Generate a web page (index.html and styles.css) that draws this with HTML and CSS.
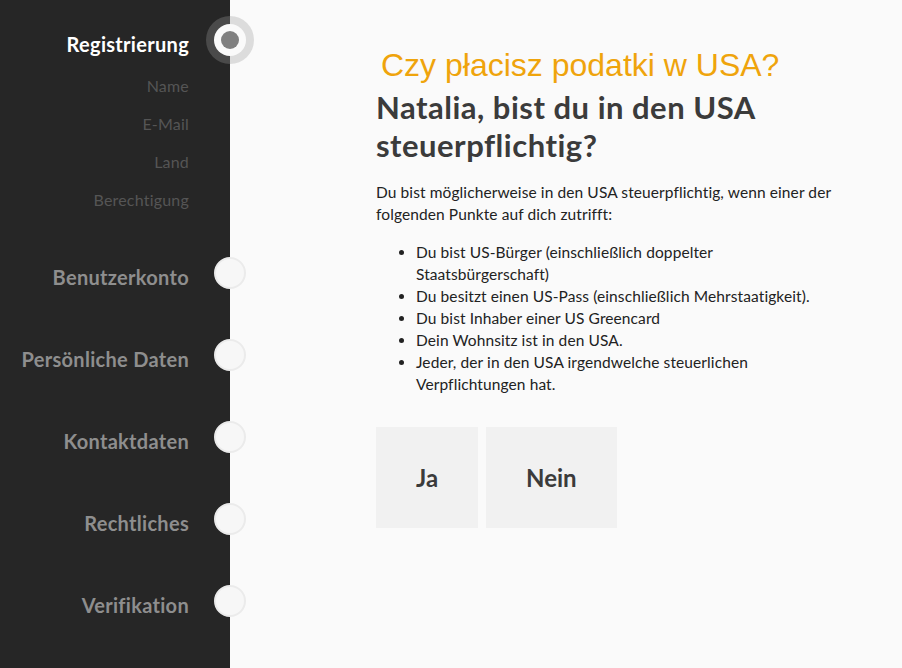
FILE: index.html
```html
<!DOCTYPE html>
<html lang="de">
<head>
<meta charset="utf-8">
<link rel="stylesheet" href="styles.css">
<title>Registrierung</title>
</head>
<body>
  <div class="wrap">
    <div class="sidebar">
      <div class="step active">Registrierung<span class="dot"></span></div>
      <ul class="substeps">
        <li>Name</li>
        <li>E-Mail</li>
        <li>Land</li>
        <li>Berechtigung</li>
      </ul>
      <div class="step first">Benutzerkonto<span class="dot"></span></div>
      <div class="step">Persönliche Daten<span class="dot"></span></div>
      <div class="step">Kontaktdaten<span class="dot"></span></div>
      <div class="step">Rechtliches<span class="dot"></span></div>
      <div class="step">Verifikation<span class="dot"></span></div>
    </div>
    <div class="main">
      <div class="content">
        <div class="translate">Czy płacisz podatki w USA?</div>
        <h1>Natalia, bist du in den USA steuerpflichtig?</h1>
        <p>Du bist möglicherweise in den USA steuerpflichtig, wenn einer der folgenden Punkte auf dich zutrifft:</p>
        <ul class="points">
          <li>Du bist US-Bürger (einschließlich doppelter Staatsbürgerschaft)</li>
          <li>Du besitzt einen US-Pass (einschließlich Mehrstaatigkeit).</li>
          <li>Du bist Inhaber einer US Greencard</li>
          <li>Dein Wohnsitz ist in den USA.</li>
          <li>Jeder, der in den USA irgendwelche steuerlichen Verpflichtungen hat.</li>
        </ul>
        <div class="answers">
          <a href="javascript:void(0);" class="btn">Ja</a>
          <a href="javascript:void(0);" class="btn">Nein</a>
        </div>
      </div>
    </div>
  </div>
</body>
</html>
```

FILE: styles.css
```css
*{margin:0;padding:0;box-sizing:border-box;}
html,body{height:100%;}
body{font-family:"Lato","Noto Sans",sans-serif;background:#fafafa;overflow:hidden;}
.wrap{display:flex;height:100vh;}

/* linke Navigation */
.sidebar{width:230px;flex:none;background:#262626;padding-top:32px;position:relative;z-index:2;}
.step{position:relative;text-align:right;padding-right:41px;font-size:20px;font-weight:700;letter-spacing:0.3px;line-height:24px;color:#8e8e8e;}
.step+.step{margin-top:58px;}
.step.first{margin-top:46px;}
.step.active{color:#fff;}
.dot{position:absolute;right:-16px;top:-8px;width:32px;height:32px;border-radius:50%;background:#f7f7f7;border:2px solid #ebebeb;}
.step.active .dot{background:#fafafa;border:none;box-shadow:0 0 0 8px rgba(154,154,154,0.31);}
.step.active .dot:after{content:"";position:absolute;left:7px;top:7px;width:18px;height:18px;border-radius:50%;background:#808080;}
.substeps{list-style:none;margin-top:11px;}
.substeps li{text-align:right;padding-right:41px;font-size:16px;letter-spacing:0.2px;line-height:38px;color:#555;}

/* Inhalt */
.main{flex:1;padding:48px 0 0 146px;}
.content{width:465px;}
.translate{font-family:"Liberation Sans",Arial,sans-serif;font-size:32px;line-height:34px;color:#efa40c;margin-left:5px;white-space:nowrap;}
h1{margin-top:6px;font-size:31px;font-weight:700;letter-spacing:0.5px;line-height:38px;color:#3b3b3b;}
p{margin-top:17px;font-size:15.5px;letter-spacing:0.1px;line-height:22px;color:#222;}
.points{margin-top:16px;padding-left:40px;font-size:15.5px;letter-spacing:0.1px;line-height:22px;color:#222;}
.answers{display:flex;gap:8px;margin-top:32px;}
.btn{display:flex;align-items:center;justify-content:center;height:101px;padding:0 40px;background:#f1f1f1;color:#3b3b3b;font-size:24px;font-weight:700;text-decoration:none;}
```
